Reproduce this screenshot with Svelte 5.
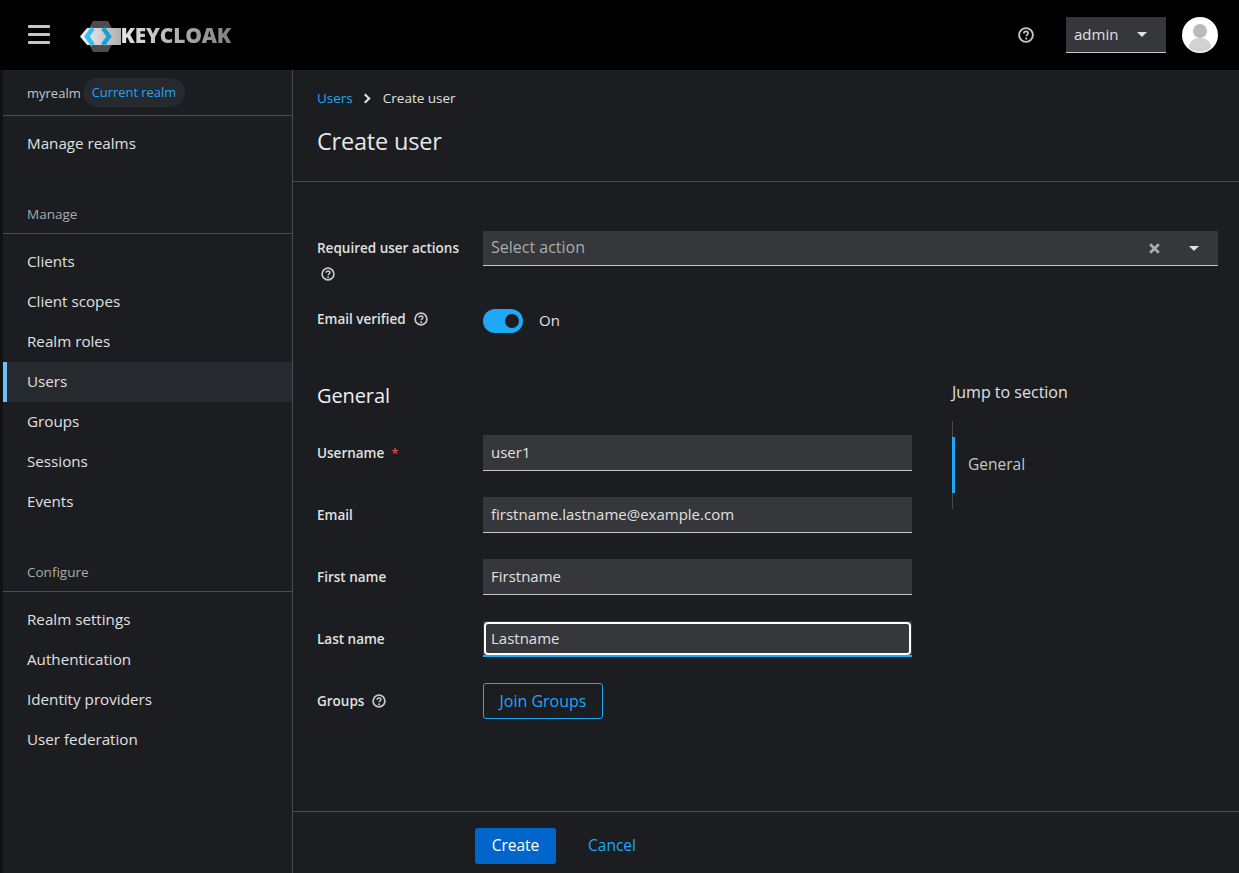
<script>
  const manage = ['Clients', 'Client scopes', 'Realm roles', 'Users', 'Groups', 'Sessions', 'Events'];
  const configure = ['Realm settings', 'Authentication', 'Identity providers', 'User federation'];
  const fields = [
    { label: 'Username', value: 'user1', required: true },
    { label: 'Email', value: 'firstname.lastname@example.com' },
    { label: 'First name', value: 'Firstname' },
    { label: 'Last name', value: 'Lastname', focused: true }
  ];
</script>

{#snippet help()}
  <svg class="help" viewBox="0 0 14 14" width="14" height="14">
    <circle cx="7" cy="7" r="5.9" fill="none" stroke="currentColor" stroke-width="1.7"/>
    <path d="M5.1 5.7c0-1.1.9-1.8 1.9-1.8s1.9.7 1.9 1.7c0 1.3-1.7 1.3-1.7 2.6" fill="none" stroke="currentColor" stroke-width="1.5"/>
    <circle cx="7.1" cy="10.2" r=".95" fill="currentColor"/>
  </svg>
{/snippet}

<div class="page">
  <header class="masthead">
    <button class="burger" aria-label="Menu"><span></span><span></span><span></span></button>
    <div class="logo">
      <svg viewBox="0 0 46 36" width="46" height="36">
        <defs>
          <linearGradient id="band" x1="0" x2="1" y1="0" y2="0">
            <stop offset="0" stop-color="#f0f0f0"/>
            <stop offset="1" stop-color="#b0b0b0"/>
          </linearGradient>
        </defs>
        <polygon points="13,4 28,4 36,19.5 28,35 13,35 5,19.5" fill="#4d4d4d"/>
        <polygon points="0,19.5 7,11 41,11 41,28 7,28" fill="url(#band)"/>
        <path d="M13 11l-6 8.5 6 8.5" fill="none" stroke="#33c0f0" stroke-width="4.5"/>
        <path d="M23 11l6 8.5-6 8.5" fill="none" stroke="#1a9fd8" stroke-width="4.5"/>
      </svg>
      <span class="logo-text">KEYCLOAK</span>
    </div>
    <div class="tools">
      <svg class="top-help" viewBox="0 0 16 16" width="16" height="16">
        <circle cx="8" cy="8" r="6.9" fill="none" stroke="currentColor" stroke-width="1.9"/>
        <path d="M5.9 6.4c0-1.2 1-2 2.1-2s2.1.8 2.1 1.9c0 1.5-1.9 1.5-1.9 3" fill="none" stroke="currentColor" stroke-width="1.7"/>
        <circle cx="8.2" cy="11.6" r="1.1" fill="currentColor"/>
      </svg>
      <div class="user-menu"><span>admin</span><i class="caret"></i></div>
      <svg class="avatar" viewBox="0 0 36 36" width="36" height="36">
        <circle cx="18" cy="18" r="18" fill="#fff"/>
        <circle cx="18" cy="14" r="7" fill="#b8bbbe"/>
        <path d="M7 31c0-7 5-10 11-10s11 3 11 10a18 18 0 0 1-22 0z" fill="#d2d2d2"/>
      </svg>
    </div>
  </header>

  <div class="body">
    <aside class="sidebar">
      <div class="realm">
        <span>myrealm</span>
        <span class="chip">Current realm</span>
      </div>
      <div class="nav-group"><a class="nav-item">Manage realms</a></div>
      <div class="nav-title">Manage</div>
      <div class="nav-group">
        {#each manage as item}
          <a class="nav-item" class:active={item === 'Users'}>{item}</a>
        {/each}
      </div>
      <div class="nav-title">Configure</div>
      <div class="nav-group">
        {#each configure as item}
          <a class="nav-item">{item}</a>
        {/each}
      </div>
    </aside>

    <main class="main">
      <section class="page-head">
        <nav class="crumbs"><a>Users</a><i class="chev"></i><span>Create user</span></nav>
        <h1>Create user</h1>
      </section>

      <section class="form-area">
        <div class="row row-actions">
          <div class="label label-wrap"><b>Required user actions</b>{@render help()}</div>
          <div class="select">
            <span>Select action</span>
            <svg class="clear" viewBox="0 0 12 12" width="13" height="13"><path d="M2 2l8 8M10 2l-8 8" stroke="currentColor" stroke-width="2.6"/></svg>
            <i class="caret"></i>
          </div>
        </div>
        <div class="row row-switch">
          <div class="label label-up"><b>Email verified</b>{@render help()}</div>
          <div class="switch-wrap"><span class="switch"><i></i></span><span class="switch-text">On</span></div>
        </div>

        <div class="columns">
          <div class="general">
            <h2>General</h2>
            {#each fields as f}
              <div class="row field">
                <div class="label"><b>{f.label}</b>{#if f.required}<em>*</em>{/if}</div>
                <div class="input" class:focused={f.focused}>{f.value}</div>
              </div>
            {/each}
            <div class="row field">
              <div class="label"><b>Groups</b>{@render help()}</div>
              <button class="join">Join Groups</button>
            </div>
          </div>
          <div class="jump">
            <div class="jump-title">Jump to section</div>
            <div class="jump-list"><div class="jump-item">General</div></div>
          </div>
        </div>
      </section>

      <footer class="actions">
        <button class="primary">Create</button>
        <button class="link">Cancel</button>
      </footer>
    </main>
  </div>
</div>

<style>
  :global(body) {
    margin: 0;
    background: #1b1d21;
    font-family: "Open Sans", "Liberation Sans", sans-serif;
    color: #e0e0e0;
  }
  .page {
    width: 1239px;
    height: 873px;
    display: flex;
    flex-direction: column;
    overflow: hidden;
    font-size: 15px;
  }
  .masthead {
    height: 70px;
    flex: none;
    background: #000;
    display: flex;
    align-items: center;
    padding: 0 21px 0 28px;
  }
  .burger {
    width: 22px;
    height: 19px;
    padding: 0;
    border: 0;
    background: none;
    display: flex;
    flex-direction: column;
    justify-content: space-between;
    margin-right: 30px;
    margin-top: -2px;
  }
  .burger span { height: 3px; background: #c7c7c7; border-radius: 1px; }
  .logo { display: flex; align-items: center; }
  .logo-text {
    font-family: "Open Sans", sans-serif;
    font-weight: 800;
    font-size: 21px;
    letter-spacing: -0.2px;
    margin-left: -5.5px;
    background: linear-gradient(90deg, #e4e4e4, #808080);
    -webkit-background-clip: text;
    background-clip: text;
    color: transparent;
  }
  .tools { margin-left: auto; display: flex; align-items: center; }
  .top-help { color: #c7c7c7; margin-right: 32px; }
  .user-menu {
    width: 100px;
    height: 36px;
    box-sizing: border-box;
    background: #36373b;
    border-bottom: 1px solid #c7c7c7;
    display: flex;
    align-items: center;
    padding: 0 19px 0 8px;
    justify-content: space-between;
    margin-right: 16px;
    margin-top: -1px;
    color: #e0e0e0;
  }
  .caret {
    width: 0;
    height: 0;
    border-left: 5px solid transparent;
    border-right: 5px solid transparent;
    border-top: 5px solid #e0e0e0;
  }
  .body { flex: 1; display: flex; min-height: 0; background: #111214; }
  .sidebar {
    width: 289px;
    margin-left: 3px;
    flex: none;
    border-right: 1px solid #4a4b4f;
    background: #1b1d21;
  }
  .realm {
    height: 45px;
    display: flex;
    align-items: center;
    gap: 2px;
    padding-left: 24px;
    border-bottom: 1px solid #4a4b4f;
    font-size: 13px;
    color: #c7c7c7;
  }
  .chip {
    background: #26292d;
    color: #1fa7f8;
    border-radius: 15px;
    padding: 0 9px;
    height: 29px;
    line-height: 29px;
    margin-top: -1px;
    font-size: 12.9px;
  }
  .nav-group { padding-top: 8px; }
  .nav-item {
    display: block;
    height: 40px;
    line-height: 38px;
    padding-left: 24px;
    color: #e0e0e0;
    box-sizing: border-box;
    font-size: 15.2px;
  }
  .nav-item.active {
    background: #26292d;
    border-left: 4px solid #73bcf7;
    padding-left: 20px;
  }
  .nav-title {
    margin-top: 31px;
    height: 39px;
    line-height: 39px;
    padding-left: 24px;
    box-sizing: border-box;
    font-size: 13.5px;
    color: #aaabac;
    border-bottom: 1px solid #4a4b4f;
  }
  .main { flex: 1; display: flex; flex-direction: column; min-width: 0; background: #1b1d21; }
  .page-head {
    height: 112px;
    flex: none;
    box-sizing: border-box;
    padding: 19px 24px 0;
    border-bottom: 1px solid #4a4b4f;
  }
  .crumbs {
    display: flex;
    align-items: center;
    font-size: 13.5px;
    height: 18px;
  }
  .crumbs a { color: #1fa7f8; }
  .chev {
    width: 5px;
    height: 5px;
    border-top: 2px solid #e0e0e0;
    border-right: 2px solid #e0e0e0;
    transform: rotate(45deg);
    margin: 0 14px 0 9px;
  }
  h1 {
    margin: 17px 0 0;
    font-size: 23.5px;
    line-height: 34px;
    font-weight: 500;
    letter-spacing: -0.2px;
    color: #e6e6e6;
  }
  .form-area { flex: 1; padding: 49px 21px 0 24px; min-height: 0; }
  .row { display: flex; }
  .label {
    width: 166px;
    flex: none;
    display: flex;
    align-items: center;
    gap: 8px;
    font-size: 13.5px;
    color: #e0e0e0;
  }
  .label b { font-weight: 600; }
  .label em { color: #fe5142; font-style: normal; margin-left: -1px; }
  .help { color: #c7c7c7; flex: none; }
  .row-actions { height: 70px; }
  .label-wrap {
    flex-direction: column;
    align-items: flex-start;
    gap: 10px;
    padding-top: 8px;
    box-sizing: border-box;
  }
  .label-wrap .help { margin-left: 4px; }
  .label-up { padding-bottom: 5px; box-sizing: border-box; }
  .select {
    flex: 1;
    height: 35px;
    box-sizing: border-box;
    background: #36373b;
    border-bottom: 1px solid #c7c7c7;
    display: flex;
    align-items: center;
    padding: 0 19px 0 8px;
    color: #aaabac;
  }
  .select span { flex: 1; font-size: 16px; padding-bottom: 2px; }
  .clear { color: #aaabac; margin-right: 28px; }
  .row-switch { height: 24px; margin-top: 8px; }
  .switch-wrap { display: flex; align-items: center; gap: 16px; color: #e0e0e0; font-size: 15px; }
  .switch-text { padding-bottom: 2px; }
  .switch {
    width: 40px;
    height: 24px;
    border-radius: 12px;
    background: #1fa7f8;
    display: flex;
    align-items: center;
    justify-content: flex-end;
    padding-right: 4px;
    box-sizing: border-box;
  }
  .switch i { width: 14px; height: 14px; border-radius: 50%; background: #1b1d21; }
  .columns { display: flex; margin-top: 49px; }
  .general { width: 595px; flex: none; }
  h2 {
    margin: 0 0 25px;
    font-size: 20px;
    line-height: 28px;
    font-weight: 500;
    letter-spacing: -0.1px;
    color: #eeeeee;
  }
  .field { height: 36px; margin-bottom: 26px; }
  .input {
    flex: 1;
    height: 36px;
    box-sizing: border-box;
    background: #36373b;
    border-bottom: 1px solid #c7c7c7;
    padding: 0 8px;
    line-height: 34px;
    color: #e0e0e0;
    position: relative;
  }
  .input.focused { border-bottom: 2px solid #1fa7f8; }
  .input.focused::after {
    content: '';
    position: absolute;
    inset: 1px 1px 0;
    border: 2px solid #fff;
    border-radius: 4px;
  }
  .join {
    width: 120px;
    height: 36px;
    padding: 0;
    background: none;
    border: 1px solid #1fa7f8;
    border-radius: 3px;
    color: #1fa7f8;
    font: inherit;
    font-size: 16px;
  }
  .jump { margin-left: 40px; flex: 1; }
  .jump-title { line-height: 20px; font-size: 16px; }
  .jump-list {
    margin-top: 19px;
    padding: 16px 0;
    border-left: 1px solid #4a4b4f;
  }
  .jump-item {
    height: 56px;
    line-height: 54px;
    margin-left: -1px;
    border-left: 3px solid #1fa7f8;
    padding-left: 13px;
    color: #c7c7c7;
    font-size: 15.5px;
  }
  .actions {
    flex: none;
    height: 62px;
    border-top: 1px solid #4a4b4f;
    display: flex;
    align-items: center;
    padding-left: 182px;
    padding-top: 7px;
    box-sizing: border-box;
    gap: 16px;
  }
  .primary, .link {
    height: 36px;
    border: 0;
    border-radius: 3px;
    font: inherit;
    font-size: 15.5px;
    padding: 0 16px 2px;
  }
  .primary { width: 81px; background: #0066cc; color: #fff; }
  .link { background: none; color: #1fa7f8; }
</style>
